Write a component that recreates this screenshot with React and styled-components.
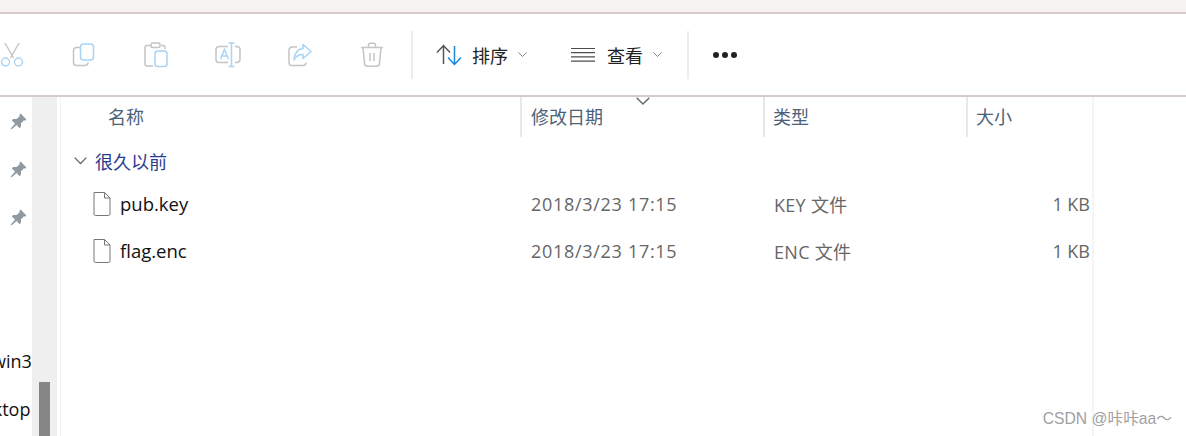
import React from "react";
import styled, { createGlobalStyle } from "styled-components";

const GlobalStyle = createGlobalStyle`
  html, body {
    margin: 0;
    height: 100%;
    overflow: hidden;
    background: #fff;
  }
  body {
    font-family: "Open Sans", "Noto Sans CJK SC", sans-serif;
  }
`;

const GRAY = "#c4c4c4";
const BLUE = "#a9d4f6";

const CutIcon = () => (
  <svg width="24" height="26" viewBox="0 0 24 26" fill="none" strokeWidth="1.4">
    <path d="M5 1l8.5 15M19 1l-8.500 15" stroke={GRAY} />
    <circle cx="5.500" cy="20" r="4" stroke={BLUE} />
    <circle cx="18.500" cy="20" r="4" stroke={BLUE} />
  </svg>
);
const CopyIcon = () => (
  <svg width="24" height="24" viewBox="0 0 24 24" fill="none" strokeWidth="1.5">
    <path d="M8 4.500H4.500A3 3 0 0 0 1.500 7.500V19.500A3 3 0 0 0 4.500 22.500H13A3 3 0 0 0 16 19.500" stroke={GRAY} />
    <rect x="8.500" y="1" width="13" height="16" rx="3" stroke={BLUE} />
  </svg>
);
const PasteIcon = () => (
  <svg width="24" height="26" viewBox="0 0 24 26" fill="none" strokeWidth="1.5">
    <path d="M7 3.500H3A2 2 0 0 0 1 5.500V22A2 2 0 0 0 3 24H9M17 3.500H19A2 2 0 0 1 21 5.500V7" stroke={GRAY} />
    <rect x="7" y="1" width="9" height="4.500" rx="1.500" stroke={GRAY} />
    <rect x="11" y="9" width="12" height="15.500" rx="2.500" stroke={BLUE} />
  </svg>
);
const RenameIcon = () => (
  <svg width="26" height="26" viewBox="0 0 26 26" fill="none" strokeWidth="1.5">
    <path d="M13 4.500H4A3 3 0 0 0 1 7.500V17.500A3 3 0 0 0 4 20.500H13M20 4.500H22A3 3 0 0 1 25 7.500V17.500A3 3 0 0 1 22 20.500H20" stroke={GRAY} />
    <path d="M13.500 1h6M16.500 1v23.500M13.500 24.500h6" stroke={BLUE} />
    <path d="M5.500 17L9.500 7.500L13.500 17M7 14h5" stroke={BLUE} />
  </svg>
);
const ShareIcon = () => (
  <svg width="24" height="24" viewBox="0 0 24 24" fill="none" strokeWidth="1.5">
    <path d="M9 4H4A3 3 0 0 0 1 7V19.500A3 3 0 0 0 4 22.500H15A3 3 0 0 0 18 19.500" stroke={GRAY} />
    <path d="M15 1.500L23 8.500L15 15.500V11.500C11 11.500 8 13 6 17C6.500 11 9.500 6 15 5.500Z" stroke={BLUE} strokeLinejoin="round" />
  </svg>
);
const DeleteIcon = () => (
  <svg width="24" height="26" viewBox="0 0 24 26" fill="none" stroke={GRAY} strokeWidth="1.5">
    <path d="M1 5.500H23M8.500 5.500V3A1.800 1.800 0 0 1 10.300 1.200H13.700A1.800 1.800 0 0 1 15.500 3V5.500" />
    <path d="M3 5.500L4.500 21.500A3 3 0 0 0 7.500 24.300H16.500A3 3 0 0 0 19.500 21.500L21 5.500" />
    <path d="M10 11v8M14 11v8" />
  </svg>
);
const SortIcon = () => (
  <svg width="26" height="22" viewBox="0 0 26 22" fill="none" strokeWidth="1.5">
    <path d="M1 8.500L7.500 1.500L14 8.500M7.500 1.500V20" stroke="#555" />
    <path d="M12 13.500L18.500 20.500L25 13.500M18.500 20.500V2" stroke="#1a86d8" />
  </svg>
);
const ViewIcon = () => (
  <svg width="24" height="16" viewBox="0 0 24 16" fill="none" stroke="#4d4d4d" strokeWidth="1.2">
    <path d="M0 1.500h24M0 5.700h24M0 9.900h24M0 14.100h24" />
  </svg>
);
const Chevron = ({ size = 9, color = "#777" }) => (
  <svg width={size} height={size * 0.6} viewBox="0 0 10 6" fill="none" stroke={color} strokeWidth="1">
    <path d="M0.500 0.500L5 5L9.500 0.500" />
  </svg>
);
const PinIcon = () => (
  <svg width="17" height="17" viewBox="0 0 16 16" fill="#8f9aa3">
    <path d="M10 0.500L15.500 6L14.300 7.200L13.200 6.800L10.300 9.700L10.300 13L9 14.300L6.200 11.200L1.200 15.500L0.500 14.800L4.800 9.800L1.700 7L3 5.700H6.300L9.200 2.800L8.800 1.700Z" />
  </svg>
);
const FileIcon = () => (
  <svg width="18" height="24" viewBox="0 0 18 24" fill="#fff" stroke="#777" strokeWidth="1">
    <path d="M1 .5H11.500L17 6V22A1.500 1.500 0 0 1 15.500 23.500H2.500A1.500 1.500 0 0 1 1 22Z" />
    <path d="M11.500 .5V6H17" fill="none" />
  </svg>
);

const Page = styled.div`
  position: relative;
  display: flex;
  flex-direction: column;
  width: 1186px;
  height: 436px;
  overflow: hidden;
`;
const TopStrip = styled.div`
  height: 12px;
  flex: none;
  background: #f5f2f1;
  border-bottom: 2px solid #d6cbcb;
`;
const Toolbar = styled.div`
  height: 81px;
  flex: none;
  display: flex;
  align-items: center;
  margin-left: -24px;
  border-bottom: 2px solid #d6cbcb;
`;
const IconButton = styled.div`
  width: 72px;
  height: 48px;
  display: flex;
  align-items: center;
  justify-content: center;
`;
const Separator = styled.div`
  width: 2px;
  height: 48px;
  background: #ececec;
  margin-left: ${(p) => p.$left || 0}px;
`;
const MenuButton = styled.div`
  display: flex;
  align-items: center;
  width: ${(p) => p.$width}px;
  padding-left: ${(p) => p.$pad}px;
  font-size: 18px;
  color: #222;
  box-sizing: border-box;
`;
const MenuLabel = styled.span`
  margin-left: ${(p) => p.$gap}px;
  margin-right: ${(p) => p.$after}px;
`;
const Dots = styled.div`
  display: flex;
  gap: 3px;
  margin-left: 24px;
`;
const Dot = styled.i`
  width: 6px;
  height: 6px;
  border-radius: 50%;
  background: #222;
`;
const Main = styled.div`
  flex: 1;
  display: flex;
  min-height: 0;
`;
const Nav = styled.div`
  width: 32px;
  flex: none;
  overflow: hidden;
`;
const NavRow = styled.div`
  height: 48px;
  display: flex;
  align-items: center;
  justify-content: ${(p) => (p.$pin ? "center" : "flex-start")};
  padding-left: ${(p) => (p.$pin ? 5 : 0)}px;
  font-size: 18px;
  color: #111;
  white-space: nowrap;
`;
const NavLabel = styled.span`
  margin-left: ${(p) => p.$left}px;
`;
const ScrollTrack = styled.div`
  width: 25px;
  flex: none;
  box-sizing: border-box;
  padding-left: 7px;
  display: flex;
  flex-direction: column;
  justify-content: flex-end;
  background: #efefef;
`;
const ScrollThumb = styled.div`
  width: 11px;
  height: 54px;
  background: #868686;
`;
const Content = styled.div`
  width: 1031px;
  flex: none;
  margin-left: 3px;
  border-left: 1px solid #f3f3f3;
  border-right: 2px solid #f5f5f5;
  position: relative;
`;
const Columns = "459px 243px 203px 125px";
const HeaderRow = styled.div`
  display: grid;
  grid-template-columns: ${Columns};
  height: 40px;
`;
const HeaderCell = styled.div`
  box-sizing: border-box;
  display: flex;
  align-items: center;
  font-size: 18px;
  color: #4b6178;
  padding-left: ${(p) => p.$pad}px;
  padding-bottom: 2px;
  border-left: ${(p) => (p.$first ? "none" : "2px solid #e8e8e8")};
`;
const SortCaret = styled.div`
  position: absolute;
  left: 575px;
  top: 0;
  line-height: 0;
`;
const GroupRow = styled.div`
  box-sizing: border-box;
  height: 43px;
  padding: 5px 0 0 13px;
  display: flex;
  align-items: center;
  gap: 8px;
  font-size: 18px;
  color: #2a3c8f;
`;
const FileRow = styled.div`
  display: grid;
  grid-template-columns: ${Columns};
  height: 47px;
  align-items: center;
  font-size: 18px;
  color: #666;
`;
const NameCell = styled.div`
  display: flex;
  align-items: center;
  gap: 9px;
  padding-left: 32px;
  font-size: 18.500px;
  color: #111;
`;
const TextCell = styled.div`
  padding-left: ${(p) => p.$pad}px;
  letter-spacing: ${(p) => p.$spacing || 0}px;
  white-space: nowrap;
`;
const SizeCell = styled.div`
  text-align: right;
  padding-right: 1px;
`;
const Watermark = styled.div`
  position: absolute;
  right: 14px;
  bottom: 7px;
  font-family: "Liberation Sans", "Noto Sans CJK SC", sans-serif;
  font-size: 15.700px;
  color: #a0a0a0;
`;

const tools = [CutIcon, CopyIcon, PasteIcon, RenameIcon, ShareIcon, DeleteIcon];
const files = [
  { name: "pub.key", date: "2018/3/23 17:15", type: "KEY 文件", size: "1 KB" },
  { name: "flag.enc", date: "2018/3/23 17:15", type: "ENC 文件", size: "1 KB" },
];

export default function App() {
  return (
    <Page>
      <GlobalStyle />
      <TopStrip />
      <Toolbar>
        {tools.map((Icon, i) => (
          <IconButton key={i}>
            <Icon />
          </IconButton>
        ))}
        <Separator $left={3} />
        <MenuButton $width={134} $pad={23}>
          <SortIcon />
          <MenuLabel $gap={10} $after={10}>排序</MenuLabel>
          <Chevron />
        </MenuButton>
        <MenuButton $width={140} $pad={24}>
          <ViewIcon />
          <MenuLabel $gap={12} $after={10}>查看</MenuLabel>
          <Chevron />
        </MenuButton>
        <Separator />
        <Dots>
          <Dot />
          <Dot />
          <Dot />
        </Dots>
      </Toolbar>
      <Main>
        <Nav>
          <NavRow $pin><PinIcon /></NavRow>
          <NavRow $pin><PinIcon /></NavRow>
          <NavRow $pin><PinIcon /></NavRow>
          <NavRow />
          <NavRow />
          <NavRow><NavLabel $left={-8}>win32</NavLabel></NavRow>
          <NavRow><NavLabel $left={-39}>Desktop</NavLabel></NavRow>
        </Nav>
        <ScrollTrack>
          <ScrollThumb />
        </ScrollTrack>
        <Content>
          <SortCaret>
            <Chevron size={14} color="#666" />
          </SortCaret>
          <HeaderRow>
            <HeaderCell $first $pad={47}>名称</HeaderCell>
            <HeaderCell $pad={9}>修改日期</HeaderCell>
            <HeaderCell $pad={8}>类型</HeaderCell>
            <HeaderCell $pad={8}>大小</HeaderCell>
          </HeaderRow>
          <GroupRow>
            <Chevron size={13} color="#666" />
            很久以前
          </GroupRow>
          {files.map((f) => (
            <FileRow key={f.name}>
              <NameCell>
                <FileIcon />
                {f.name}
              </NameCell>
              <TextCell $pad={11} $spacing={0.7}>{f.date}</TextCell>
              <TextCell $pad={11} $spacing={0.3}>{f.type}</TextCell>
              <SizeCell>{f.size}</SizeCell>
            </FileRow>
          ))}
        </Content>
      </Main>
      <Watermark>CSDN @咔咔aa～</Watermark>
    </Page>
  );
}
